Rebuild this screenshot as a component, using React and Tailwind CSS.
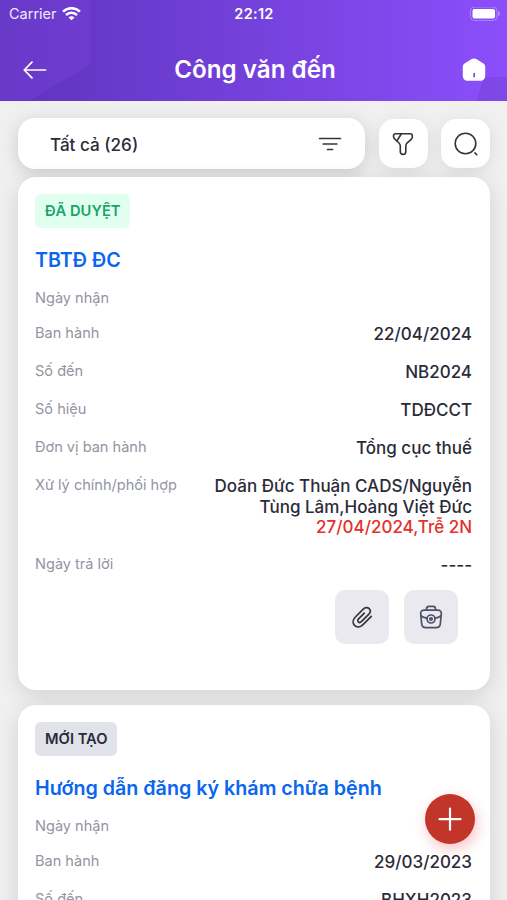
const documents = [
  {
    id: 1,
    status: "ĐÃ DUYỆT",
    statusClass: "bg-[#e0ffee] text-[#1aa36b]",
    title: "TBTĐ ĐC",
    rows: [
      { label: "Ngày nhận", value: "" },
      { label: "Ban hành", value: "22/04/2024" },
      { label: "Số đến", value: "NB2024" },
      { label: "Số hiệu", value: "TDĐCCT" },
      { label: "Đơn vị ban hành", value: "Tổng cục thuế" },
      {
        label: "Xử lý chính/phối hợp",
        value: "Doãn Đức Thuận CADS/Nguyễn Tùng Lâm,Hoàng Việt Đức",
        late: "27/04/2024,Trễ 2N",
      },
      { label: "Ngày trả lời", value: "----" },
    ],
  },
  {
    id: 2,
    status: "MỚI TẠO",
    statusClass: "bg-[#e1e2ea] text-[#2b2b38]",
    title: "Hướng dẫn đăng ký khám chữa bệnh",
    rows: [
      { label: "Ngày nhận", value: "" },
      { label: "Ban hành", value: "29/03/2023" },
      { label: "Số đến", value: "BHXH2023" },
    ],
  },
];

function WifiIcon() {
  return (
    <svg width="19" height="14" viewBox="0 0 19 14" fill="none" stroke="white" strokeWidth="2.5">
      <path d="M1 4.6C5.8 0 13.2 0 18 4.6" />
      <path d="M4 8c3.1-3 7.900-3 11 0" />
      <path d="M9.500 13.300 6.500 10.400c1.700-1.600 4.300-1.600 6 0z" fill="white" stroke="none" />
    </svg>
  );
}

function BatteryIcon() {
  return (
    <svg width="31" height="15" viewBox="0 0 31 15" fill="none">
      <rect x="0.5" y="0" width="26.5" height="13.5" rx="3.8" stroke="white" strokeOpacity="0.3" />
      <rect x="2.5" y="2" width="22.5" height="9.5" rx="2" fill="white" />
      <path d="M28.3 4.3c1.8.8 1.8 4.1 0 4.9z" fill="white" fillOpacity="0.5" />
    </svg>
  );
}

function BackIcon() {
  return (
    <svg width="24" height="18" viewBox="0 0 24 18" fill="none" stroke="white" strokeWidth="1.7" strokeLinecap="round" strokeLinejoin="round">
      <path d="M9 1.200 1.200 9l7.800 7.800M1.400 9H22.600" />
    </svg>
  );
}

function HomeIcon() {
  return (
    <svg width="24" height="24" viewBox="0 0 24 24">
      <path d="M9.300 1.200 2.500 5.600C1.300 6.500.8 7.800.8 9.200v8.600c0 3 2 5 5 5h12.400c3 0 5-2 5-5V9.200c0-1.400-.5-2.700-1.700-3.600L14.700 1.200c-1.600-1.100-3.800-1.100-5.400 0z" fill="white" />
      <path d="M12.200 15.700v2.800" stroke="#7444dd" strokeWidth="1.700" strokeLinecap="round" />
    </svg>
  );
}

function SortIcon() {
  return (
    <svg width="24" height="16" viewBox="0 0 24 16" stroke="#34343c" strokeWidth="1.7" strokeLinecap="round">
      <path d="M1.600 2.500h20.800M5.200 8h13.600M9.500 13.500h5" />
    </svg>
  );
}

function FilterIcon() {
  return (
    <svg width="22" height="24" viewBox="0 0 22 24" fill="none" stroke="#34343c" strokeWidth="1.6" strokeLinejoin="round" strokeLinecap="round">
      <path d="M3.500 1.700h14.600c1.300 0 2.200.8 2.200 2v1.200c0 1-.4 1.700-1.200 2.400l-3.900 3.500c-1 .9-1.400 1.700-1.400 3v5.600c0 1.800-1.100 3-2.700 3s-2.800-1.200-2.800-3v-5.300c0-1.300-.4-2.200-1.300-3.100L2.600 6.900c-.7-.7-1.100-1.400-1.100-2.300v-.9c0-1.200.8-2 2-2z" />
      <path d="M9.300 2 4.900 8.700" />
    </svg>
  );
}

function SearchIcon() {
  return (
    <svg width="24" height="24" viewBox="0 0 24 24" fill="none" stroke="#34343c" strokeWidth="1.6" strokeLinecap="round">
      <circle cx="11.500" cy="11.500" r="10.300" />
      <path d="m20.900 20.900 1.900 1.900" />
    </svg>
  );
}

function ClipIcon() {
  return (
    <svg width="23" height="23" viewBox="0 0 22 22" fill="none" stroke="#34343f" strokeWidth="1.6" strokeLinecap="round" strokeLinejoin="round">
      <path d="m12.700 6.900-5.500 5.500c-.9.9-.9 2.100-.2 2.800.8.800 2 .7 2.900-.2l7-7c1.800-1.800 1.900-4.100.5-5.500s-3.900-1.300-5.700.5L4.200 10.500c-2.700 2.700-2.800 6-.8 8.100 2.100 2 5.500 1.800 8.100-.8l7.900-7.900" />
    </svg>
  );
}

function BriefcaseIcon() {
  return (
    <svg width="24" height="24" viewBox="0 0 24 24" fill="none" stroke="#4f5069" strokeWidth="1.7" strokeLinecap="round" strokeLinejoin="round">
      <path d="M7 22.700h10c2.900 0 4-.9 4.300-3.500l1-10.200c.2-2.400-.9-3.800-3.500-3.800H5.200c-2.600 0-3.700 1.400-3.500 3.800l1 10.200c.3 2.600 1.400 3.500 4.300 3.500z" />
      <path d="M7.500 5V3.800c0-1.600.9-2.500 2.500-2.500h4c1.600 0 2.500.9 2.500 2.500V5" />
      <path d="M1.900 10.800c1.700 1.300 3.600 2.100 5.900 2.400M22.100 10.800c-1.700 1.300-3.600 2.100-5.900 2.400" />
      <circle cx="12" cy="14" r="4" />
      <circle cx="12" cy="14" r="1.200" />
    </svg>
  );
}

function Header() {
  return (
    <header className="relative h-[101px] bg-linear-to-r from-[#5f33bd] to-[#8b4ffb] text-white">
      <svg className="absolute inset-0" width="507" height="101" viewBox="0 0 507 101">
        <path d="M0 0h90.5v64L30 100.5H0z" fill="#7d45e0" fillOpacity="0.35" />
        <path d="M484 77h23v24h-31z" fill="#6b3bc9" fillOpacity="0.35" />
      </svg>
      <div className="relative grid h-7 grid-cols-3 items-center pl-[9px] pr-[6px]">
        <div className="flex items-center gap-[5px] text-[14.5px] text-white/90">
          Carrier
          <WifiIcon />
        </div>
        <div className="pr-[2px] text-center text-[14.5px] font-semibold tracking-[0.3px]">22:12</div>
        <div className="flex justify-end">
          <BatteryIcon />
        </div>
      </div>
      <div className="relative flex h-[84px] items-center justify-between pl-[23px] pr-[21px]">
        <BackIcon />
        <h1 className="pl-px text-[24.2px] font-semibold">Công văn đến</h1>
        <HomeIcon />
      </div>
    </header>
  );
}

function Toolbar() {
  return (
    <div className="flex h-[51px] items-center">
      <button className="flex h-[51px] w-[347px] items-center justify-between rounded-[17px] bg-white pl-[32px] pr-[23.5px] shadow-[0_4px_18px_rgba(0,0,0,0.16)]">
        <span className="pt-[2px] text-[17.1px] font-medium text-[#2b2b38]">Tất cả (26)</span>
        <SortIcon />
      </button>
      <button className="ml-[13.5px] flex size-[49px] items-center justify-center rounded-[15px] bg-white shadow-[0_4px_18px_rgba(0,0,0,0.09)]">
        <FilterIcon />
      </button>
      <button className="ml-[13.5px] flex size-[49px] items-center justify-center rounded-[15px] bg-white shadow-[0_4px_18px_rgba(0,0,0,0.09)]">
        <SearchIcon />
      </button>
    </div>
  );
}

function DocumentCard({ doc }) {
  return (
    <article className="h-[513px] shrink-0 rounded-[18px] bg-white pt-[17px] pr-[18px] pl-[17px] shadow-[0_5px_22px_rgba(0,0,0,0.13)]">
      <span className={`inline-flex h-[34px] items-center rounded-md px-[10px] text-[14.7px] font-semibold ${doc.statusClass}`}>
        {doc.status}
      </span>
      <h2 className="mt-[10px] pt-[6.5px] text-[19.7px] leading-[30px] font-semibold text-[#0a66ee]">{doc.title}</h2>
      <dl className="mt-[14px] flex flex-col gap-[17px]">
        {doc.rows.map((row) => (
          <div key={row.label} className="flex justify-between">
            <dt className="shrink-0 text-[14.55px] leading-[18.5px] text-[#9494a3]">{row.label}</dt>
            {row.value && (
              <dd className="w-[262px] text-right text-[17px] leading-[20.9px] font-medium text-[#2b2b38]">
                {row.value}
                {row.late && <div className="text-[#e5302c]">{row.late}</div>}
              </dd>
            )}
          </div>
        ))}
      </dl>
      <div className="mt-[14px] flex justify-end gap-[15px] pr-[14px]">
        <button className="flex size-[54px] items-center justify-center rounded-[10px] bg-[#e9e9ef]">
          <ClipIcon />
        </button>
        <button className="flex size-[54px] items-center justify-center rounded-[10px] bg-[#e9e9ef]">
          <BriefcaseIcon />
        </button>
      </div>
    </article>
  );
}

export default function App() {
  return (
    <div className="relative flex h-[900px] w-[507px] flex-col overflow-hidden bg-[#f0f0f0] font-[Inter,sans-serif]">
      <Header />
      <main className="flex min-h-0 flex-1 flex-col overflow-hidden pt-[17px] pr-[17px] pl-[18px]">
        <Toolbar />
        <div className="mt-2 flex flex-col gap-[15px]">
          {documents.map((doc) => (
            <DocumentCard key={doc.id} doc={doc} />
          ))}
        </div>
      </main>
      <button className="absolute top-[794px] left-[425px] flex size-[50px] items-center justify-center rounded-full bg-[#c23529] shadow-[2px_5px_14px_rgba(240,50,60,0.3)]">
        <svg width="24" height="24" viewBox="0 0 24 24" stroke="white" strokeWidth="2.2" strokeLinecap="round">
          <path d="M12 1.700v21M1.500 12.200h21" />
        </svg>
      </button>
    </div>
  );
}
